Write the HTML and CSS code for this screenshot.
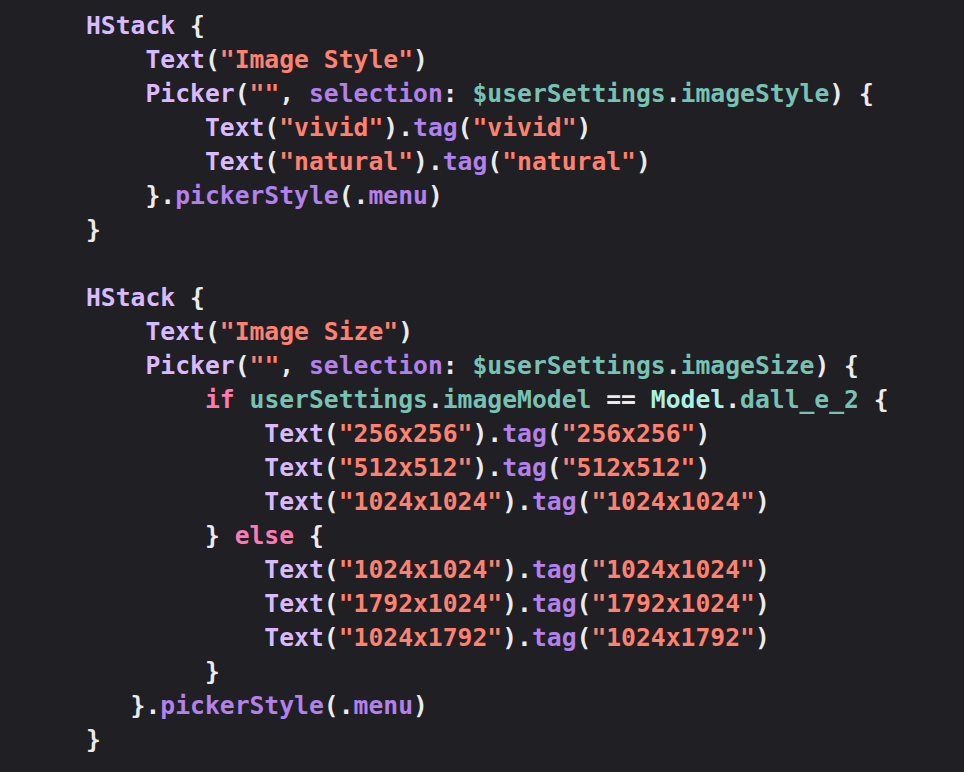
FILE: index.html
```html
<!DOCTYPE html>
<html>
<head>
<meta charset="utf-8">
<link rel="stylesheet" href="styles.css">
</head>
<body>
<pre class="code"><span class="t">HStack</span> {
    <span class="t">Text</span>(<span class="s">"Image Style"</span>)
    <span class="t">Picker</span>(<span class="s">""</span>, <span class="m">selection</span>: <span class="v">$userSettings</span>.<span class="v">imageStyle</span>) {
        <span class="t">Text</span>(<span class="s">"vivid"</span>).<span class="m">tag</span>(<span class="s">"vivid"</span>)
        <span class="t">Text</span>(<span class="s">"natural"</span>).<span class="m">tag</span>(<span class="s">"natural"</span>)
    }.<span class="m">pickerStyle</span>(.<span class="m">menu</span>)
}

<span class="t">HStack</span> {
    <span class="t">Text</span>(<span class="s">"Image Size"</span>)
    <span class="t">Picker</span>(<span class="s">""</span>, <span class="m">selection</span>: <span class="v">$userSettings</span>.<span class="v">imageSize</span>) {
        <span class="k">if</span> <span class="v">userSettings</span>.<span class="v">imageModel</span> == <span class="p">Model</span>.<span class="v">dall_e_2</span> {
            <span class="t">Text</span>(<span class="s">"256x256"</span>).<span class="m">tag</span>(<span class="s">"256x256"</span>)
            <span class="t">Text</span>(<span class="s">"512x512"</span>).<span class="m">tag</span>(<span class="s">"512x512"</span>)
            <span class="t">Text</span>(<span class="s">"1024x1024"</span>).<span class="m">tag</span>(<span class="s">"1024x1024"</span>)
        } <span class="k">else</span> {
            <span class="t">Text</span>(<span class="s">"1024x1024"</span>).<span class="m">tag</span>(<span class="s">"1024x1024"</span>)
            <span class="t">Text</span>(<span class="s">"1792x1024"</span>).<span class="m">tag</span>(<span class="s">"1792x1024"</span>)
            <span class="t">Text</span>(<span class="s">"1024x1792"</span>).<span class="m">tag</span>(<span class="s">"1024x1792"</span>)
        }
   }.<span class="m">pickerStyle</span>(.<span class="m">menu</span>)
}</pre>
</body>
</html>
```
FILE: styles.css
```css
html, body {
  margin: 0;
  padding: 0;
  background: #1f1f24;
  height: 100%;
}
.code {
  margin: 0;
  padding: 9px 0 0 86px;
  font-family: "DejaVu Sans Mono", "Liberation Mono", monospace;
  font-weight: bold;
  font-size: 24.7px;
  line-height: 34px;
  color: #ebebed;
  white-space: pre;
}
.t { color: #dabaff; }
.s { color: #ff8170; }
.k { color: #ff7ab2; }
.m { color: #b281eb; }
.v { color: #78c2b3; }
.p { color: #acf2e4; }
```
